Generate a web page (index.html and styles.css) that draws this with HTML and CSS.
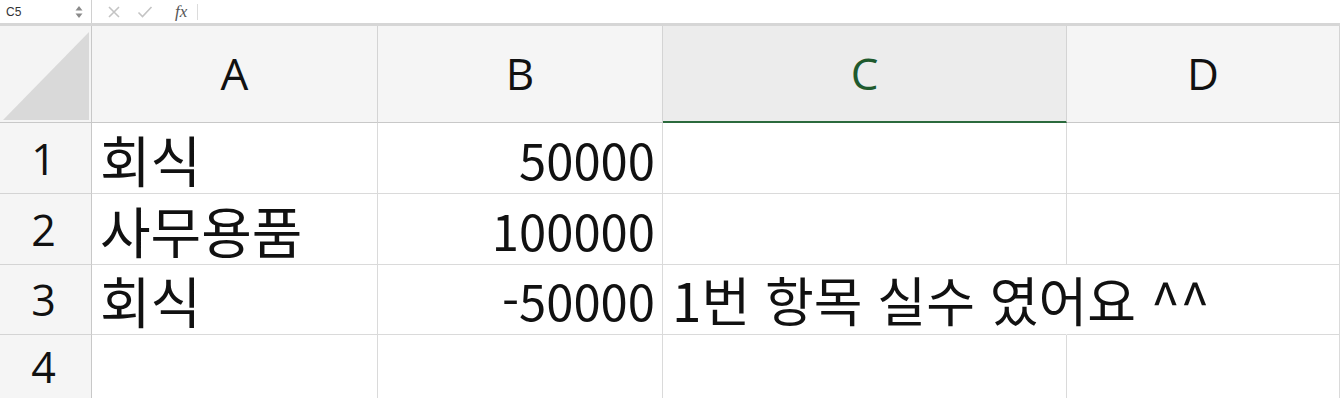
FILE: index.html
```html
<!DOCTYPE html>
<html lang="ko">
<head>
<meta charset="utf-8">
<title>Sheet</title>
<link rel="stylesheet" href="styles.css">
</head>
<body>
<div class="fbar">
  <div class="namebox">
    <span class="name">C5</span>
    <svg class="spin" width="8" height="14" viewBox="0 0 8 14"><path d="M4 1 L7.5 5.5 L0.5 5.5 Z" fill="#8a8a8a"/><path d="M4 13 L7.5 8.5 L0.5 8.5 Z" fill="#8a8a8a"/></svg>
  </div>
  <div class="tools">
    <svg class="ico x" width="14" height="14" viewBox="0 0 14 14"><path d="M2 2 L12 12 M12 2 L2 12" stroke="#c4c4c4" stroke-width="1.6" fill="none"/></svg>
    <svg class="ico ok" width="16" height="14" viewBox="0 0 16 14"><path d="M1.5 7.5 L5.5 11.5 L14.5 2" stroke="#c4c4c4" stroke-width="1.6" fill="none"/></svg>
    <span class="fx">fx</span>
    <span class="sep"></span>
  </div>
</div>
<div class="sheet">
  <div class="corner"><div class="tri"></div></div>
  <div class="ch">A</div>
  <div class="ch">B</div>
  <div class="ch sel">C</div>
  <div class="ch">D</div>

  <div class="rh">1</div>
  <div class="c">회식</div>
  <div class="c num">50000</div>
  <div class="c"></div>
  <div class="c"></div>

  <div class="rh">2</div>
  <div class="c">사무용품</div>
  <div class="c num">100000</div>
  <div class="c"></div>
  <div class="c"></div>

  <div class="rh">3</div>
  <div class="c">회식</div>
  <div class="c num">-50000</div>
  <div class="c over">1번 항목 실수 였어요 ^^</div>
  <div class="c"></div>

  <div class="rh">4</div>
  <div class="c"></div>
  <div class="c"></div>
  <div class="c"></div>
  <div class="c"></div>
</div>
</body>
</html>
```
FILE: styles.css
```css
* { box-sizing: border-box; }
html, body { margin: 0; padding: 0; background: #fff; overflow: hidden; }
body {
  width: 1340px;
  height: 398px;
  font-family: "Noto Sans CJK KR", "Noto Sans", sans-serif;
  color: #111;
}
.fbar {
  height: 26px;
  display: flex;
  align-items: stretch;
  border-bottom: 3px solid #d6d6d6;
  background: #fff;
}
.namebox {
  width: 92px;
  border-right: 1px solid #d0d0d0;
  display: flex;
  align-items: center;
  justify-content: space-between;
  padding: 0 8px 0 6px;
}
.name {
  font-family: "Liberation Sans", sans-serif;
  font-size: 12px;
  color: #333;
}
.tools {
  display: flex;
  align-items: center;
  padding-left: 15px;
}
.ico.x { margin-right: 16px; }
.ico.ok { margin-right: 22px; }
.fx {
  font-family: "Liberation Serif", serif;
  font-style: italic;
  font-size: 17px;
  color: #555;
}
.sep {
  width: 1px;
  height: 16px;
  background: #dcdcdc;
  margin-left: 10px;
}
.sheet {
  display: grid;
  grid-template-columns: 92px 286px 285px 404px 1fr;
  grid-template-rows: 97px 71px 71px 70px 64px;
}
.corner {
  background: #f4f4f4;
  border-right: 1px solid #c8c8c8;
  border-bottom: 1px solid #c8c8c8;
  padding: 6px 2px 2px 3px;
}
.tri {
  width: 100%;
  height: 100%;
  background: #d9d9d9;
  clip-path: polygon(0 100%, 100% 0, 100% 100%);
}
.ch {
  background: #f5f5f5;
  border-right: 1px solid #d4d4d4;
  border-bottom: 1px solid #c8c8c8;
  display: flex;
  align-items: center;
  justify-content: center;
  font-family: "Open Sans", "Noto Sans CJK KR", sans-serif;
  font-size: 44px;
  line-height: 1;
  padding-bottom: 2px;
}
.ch.sel {
  background: #ececec;
  color: #1f5a2e;
  border-bottom: 2px solid #2b6a3d;
}
.rh {
  background: #f5f5f5;
  border-right: 1px solid #c8c8c8;
  border-bottom: 1px solid #d4d4d4;
  display: flex;
  align-items: center;
  justify-content: center;
  font-family: "Open Sans", "Noto Sans CJK KR", sans-serif;
  font-size: 43px;
  line-height: 1;
  padding-right: 4px;
}
.c {
  border-right: 1px solid #dadada;
  border-bottom: 1px solid #dadada;
  display: flex;
  align-items: center;
  padding: 0 8px 0 8px;
  font-size: 55px;
  line-height: 1;
  white-space: nowrap;
  overflow: visible;
  position: relative;
}
.c.num {
  justify-content: flex-end;
  padding-right: 7px;
  font-size: 49px;
}
.c.over {
  border-right-color: #fff;
  z-index: 1;
  padding-left: 9px;
  font-size: 53px;
}
```
